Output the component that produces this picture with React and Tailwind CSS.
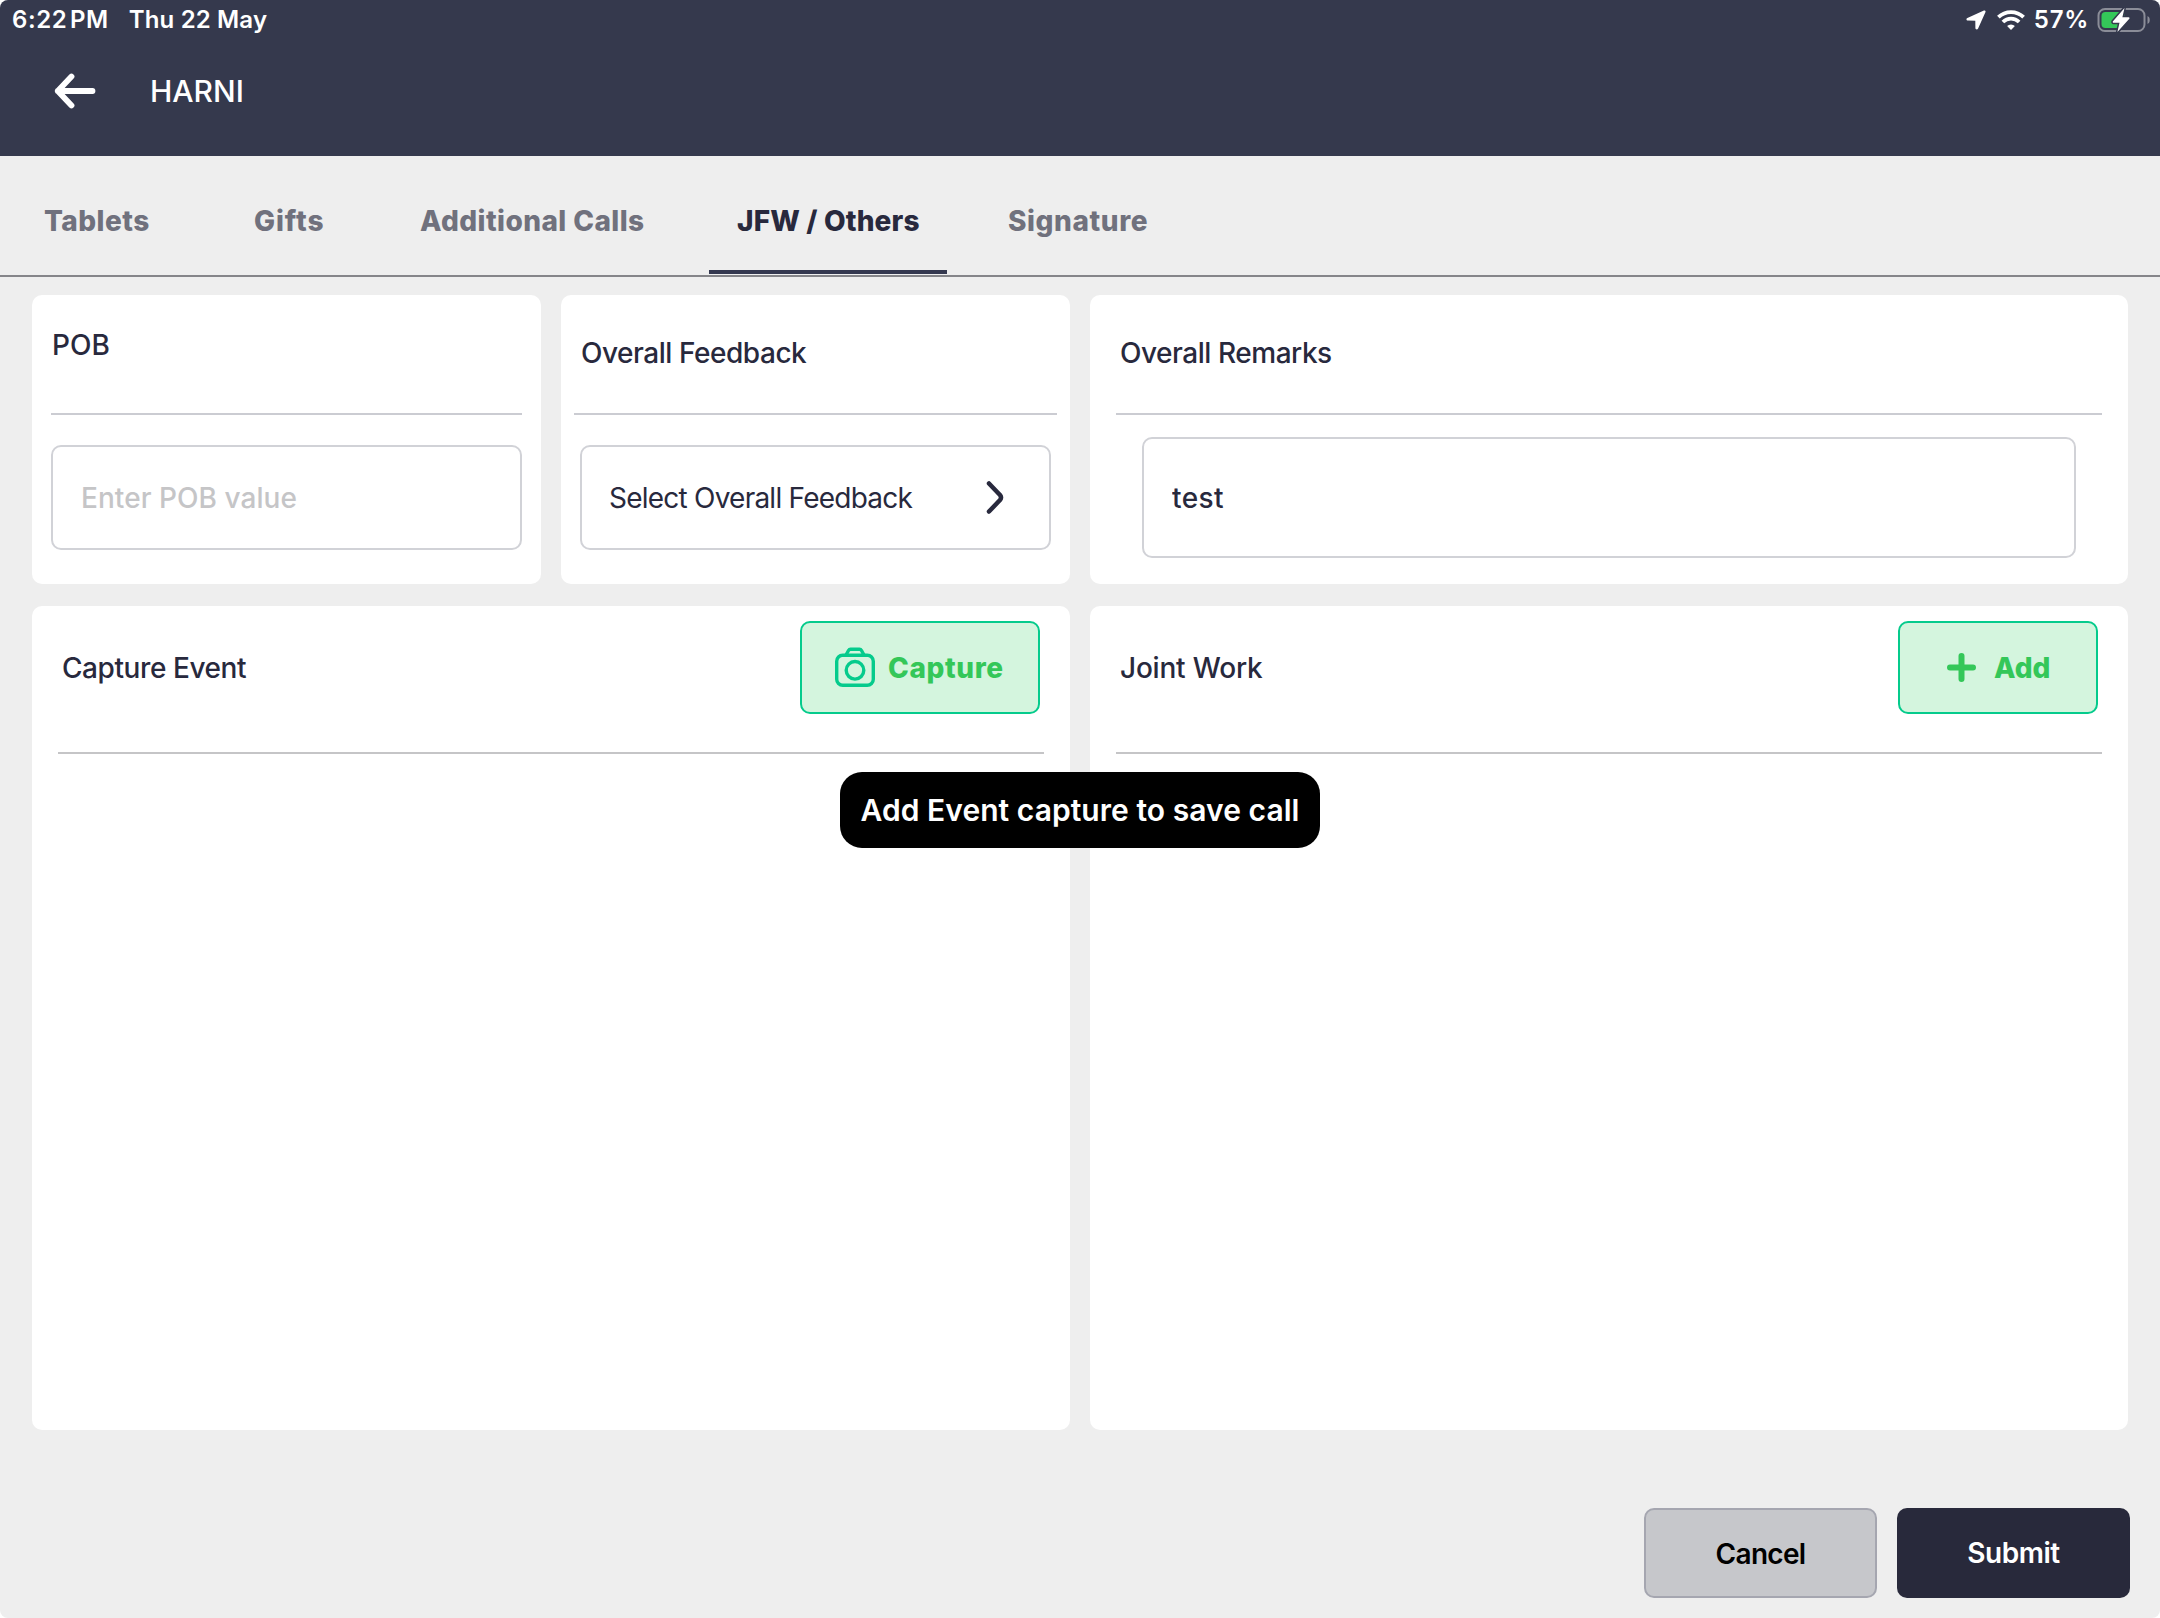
import React, { useState } from 'react';

const TABS = [
  { key: 'tablets', label: 'Tablets', className: 'w-[209px] pl-11 tracking-[0.45px]' },
  { key: 'gifts', label: 'Gifts', className: 'w-[168px] pl-[45px] tracking-[0.9px]' },
  { key: 'calls', label: 'Additional Calls', className: 'w-[332px] pl-[43px] tracking-[0.42px]' },
  { key: 'others', label: 'JFW / Others', className: 'w-[238px] pl-7 tracking-[0.15px]' },
  { key: 'signature', label: 'Signature', className: 'w-[262px] pl-[61px] tracking-[0.6px]' },
];

/**
 * System status bar
 */
function StatusBar() {
  return (
    <div className="flex h-10 items-center justify-between pl-3 pr-[9px] text-[24px] font-semibold leading-10 text-white">
      <div className="flex gap-5 whitespace-nowrap">
        <span className="tracking-[0.6px] [word-spacing:-4px]">6:22 PM</span>
        <span className="tracking-[0.15px]">Thu 22 May</span>
      </div>
      <div className="flex items-center">
        <svg className="mr-[11px] h-5 w-5" viewBox="0 0 20 20" fill="#fff">
          <path d="M17.900.5 1.400 7.900C-.1 8.600.2 10.600 1.900 10.600l7.400.1.1 7.400c0 1.700 2 2 2.700.5L19.500 2.100c.4-1-.600-2-1.600-1.600Z" />
        </svg>
        <svg className="mr-[9px] h-5 w-7" viewBox="0 0 28 20" fill="none" stroke="#fff" strokeWidth="3.800">
          <path d="M1.400 7.200a18 18 0 0 1 25.200 0" />
          <path d="M5.900 12a11.600 11.600 0 0 1 16.200 0" />
          <path d="M14 20l-3.900-3.900a5.600 5.600 0 0 1 7.800 0z" fill="#fff" stroke="none" />
        </svg>
        <span className="mr-2 tracking-[0.7px]">57%</span>
        <svg className="h-[26px] w-[54px]" viewBox="0 0 54 26" fill="none">
          <rect x="1.500" y="2" width="46" height="22" rx="6.500" stroke="#8b8d98" strokeWidth="2" />
          <path d="M50.500 9v8c3-1.300 3-6.700 0-8Z" fill="#8b8d98" />
          <rect x="4.500" y="5" width="23" height="16" rx="4" fill="#34c759" />
          <path
            d="M27.500 1 16 14.200c-.6.800-.2 1.600.7 1.600h5.800L20.400 25 32.300 11.800c.6-.8.2-1.600-.7-1.600h-6.200Z"
            fill="#fff"
            stroke="#35394d"
            strokeWidth="3"
            paintOrder="stroke"
          />
        </svg>
      </div>
    </div>
  );
}

function Header() {
  return (
    <header className="h-[156px] bg-[#35394d]">
      <StatusBar />
      <div className="flex h-[102px] items-center pl-[54px] text-white">
        <svg className="h-9 w-[42px]" viewBox="0 0 42 36" fill="none" stroke="#fff" strokeWidth="5.800" strokeLinecap="round" strokeLinejoin="round">
          <path d="M17.500 3.500 3.800 18l13.700 14.500M3.800 18h34.700" />
        </svg>
        <h1 className="ml-[54px] text-[30px] font-medium">HARNI</h1>
      </div>
    </header>
  );
}

/**
 * Section tabs under the header
 */
function TabBar({ active, onChange }) {
  return (
    <nav className="flex h-[121px] border-b-2 border-[#858589]">
      {TABS.map(tab => {
        const isActive = tab.key === active;
        return (
          <button
            key={tab.key}
            onClick={() => onChange(tab.key)}
            className={`
              mb-px flex h-[118px] items-center whitespace-nowrap border-b-4 pt-[15px] text-[28px] font-extrabold
              ${tab.className}
              ${isActive ? 'border-[#34384f] text-[#28293d]' : 'border-transparent text-[#70717d]'}
            `}
          >
            {tab.label}
          </button>
        );
      })}
    </nav>
  );
}

function Card({ className, children }) {
  return <section className={`rounded-[10px] bg-white ${className}`}>{children}</section>;
}

function CameraIcon() {
  return (
    <svg className="h-[42px] w-[42px]" viewBox="0 0 42 42" fill="none" stroke="#05cb8c" strokeWidth="3.400" strokeLinejoin="round">
      <rect x="2.700" y="8.300" width="36.600" height="30" rx="6" />
      <circle cx="21" cy="23.300" r="8.800" />
      <path d="M12 8 14.500 3.500q.7-1.300 2-1.300h9q1.300 0 2 1.300l2.500 4.500" />
    </svg>
  );
}

function PlusIcon() {
  return (
    <svg className="h-[30px] w-[30px]" viewBox="0 0 30 30" stroke="#34c759" strokeWidth="6" strokeLinecap="round">
      <path d="M15.500 3v23M4 14.500h23" />
    </svg>
  );
}

function ActionButton({ className, children }) {
  return (
    <button className={`flex h-[93px] items-center rounded-[10px] border-2 border-[#05cb8c] bg-[#d4f5de] text-[28px] font-extrabold text-[#34c759] ${className}`}>
      {children}
    </button>
  );
}

function Toast({ message }) {
  return (
    <div className="absolute left-[840px] top-[772px] flex h-[76px] w-[480px] items-center justify-center whitespace-nowrap rounded-[22px] bg-black text-[30px] font-semibold tracking-[0.05px] text-white">
      {message}
    </div>
  );
}

export default function App() {
  const [tab, setTab] = useState('others');
  const [remarks, setRemarks] = useState('test');

  return (
    <div className="bg-white">
      <div className="relative flex h-[1618px] w-[2160px] flex-col overflow-hidden rounded-[8px] bg-[#eeeeee] font-['Inter',sans-serif] text-[#28293d]">
        <Header />
        <TabBar active={tab} onChange={setTab} />

        <main className="flex flex-col gap-[22px] px-8 pt-[18px]">
          <div className="flex h-[289px] gap-5">
            <Card className="w-[509px] px-[19px]">
              <h2 className="flex h-[118px] items-center pb-[18px] pl-px text-[28px] font-medium">POB</h2>
              <div className="h-[2px] bg-[#cbccd2]" />
              <input
                className="mt-[30px] h-[105px] w-full rounded-[10px] border-2 border-[#d1d2d7] px-7 text-[28px] font-medium tracking-[0.05px] placeholder:text-[#c5c5c7]"
                placeholder="Enter POB value"
              />
            </Card>

            <Card className="w-[509px] px-[13px]">
              <h2 className="flex h-[118px] items-center pb-[2px] pl-[7px] text-[28px] font-medium tracking-[-0.46px]">Overall Feedback</h2>
              <div className="h-[2px] bg-[#cbccd2]" />
              <button className="ml-[6px] mt-[30px] flex h-[105px] w-[471px] items-center justify-between rounded-[10px] border-2 border-[#d1d2d7] pl-[27px] pr-[45px] text-[28px]">
                <span className="tracking-[-0.77px]">Select Overall Feedback</span>
                <svg className="h-[34px] w-[18px]" viewBox="0 0 18 34" fill="none" stroke="#28293d" strokeWidth="4.500" strokeLinecap="round" strokeLinejoin="round">
                  <path d="M3 2.500l11 11.500q2 2.500 0 5L3 30.500" />
                </svg>
              </button>
            </Card>

            <Card className="w-[1038px] px-[26px]">
              <h2 className="flex h-[118px] items-center pb-[2px] pl-1 text-[28px] font-medium tracking-[-0.46px]">Overall Remarks</h2>
              <div className="h-[2px] bg-[#cbccd2]" />
              <input
                className="ml-[26px] mt-[22px] h-[121px] w-[934px] rounded-[10px] border-2 border-[#d1d2d7] px-7 text-[28px] font-medium tracking-[0.4px]"
                value={remarks}
                onChange={e => setRemarks(e.target.value)}
              />
            </Card>
          </div>

          <div className="flex h-[824px] gap-5">
            <Card className="w-[1038px] px-[26px]">
              <div className="flex h-[146px] items-start justify-between pl-1 pr-1 pt-[15px]">
                <h2 className="text-[28px] font-medium leading-[95px] tracking-[-0.42px]">Capture Event</h2>
                <ActionButton className="w-60 gap-3 pl-8 tracking-[0.6px]">
                  <CameraIcon />
                  Capture
                </ActionButton>
              </div>
              <div className="h-[2px] bg-[#c5c5c7]" />
            </Card>

            <Card className="w-[1038px] px-[26px]">
              <div className="flex h-[146px] items-start justify-between pl-1 pr-1 pt-[15px]">
                <h2 className="text-[28px] font-medium leading-[95px] tracking-[-0.2px]">Joint Work</h2>
                <ActionButton className="w-[200px] gap-[18px] pl-[46px]">
                  <PlusIcon />
                  Add
                </ActionButton>
              </div>
              <div className="h-[2px] bg-[#c5c5c7]" />
            </Card>
          </div>
        </main>

        <footer className="mt-[78px] flex justify-end gap-5 pr-[30px] text-[28px] font-semibold">
          <button className="h-[90px] w-[233px] rounded-[10px] border-2 border-[#a5a6b0] bg-[#c6c7cb] pt-[2px] tracking-[-0.7px] text-black">
            Cancel
          </button>
          <button className="h-[90px] w-[233px] rounded-[10px] bg-[#28293b] tracking-[-0.5px] text-white">Submit</button>
        </footer>

        <Toast message="Add Event capture to save call" />
      </div>
    </div>
  );
}
